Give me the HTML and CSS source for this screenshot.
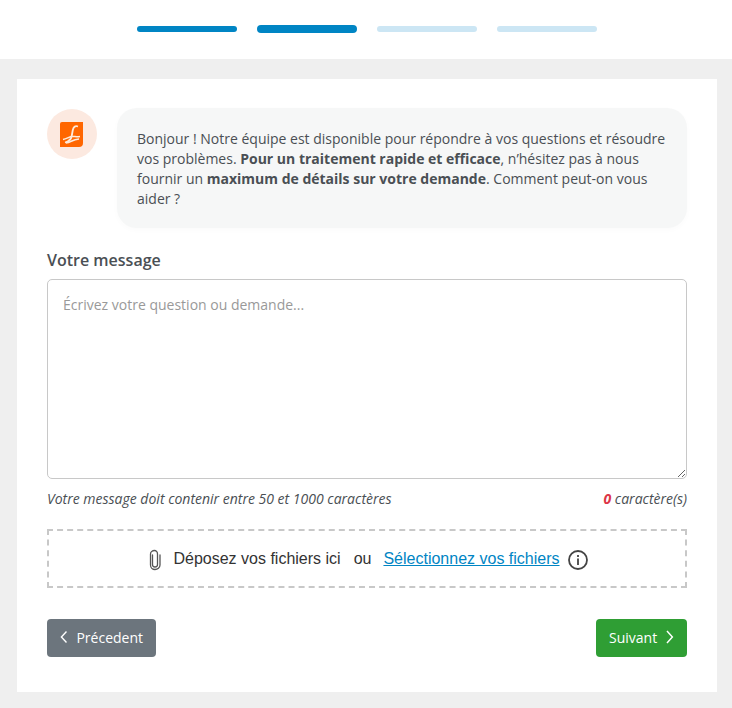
FILE: index.html
```html
<!DOCTYPE html>
<html lang="fr">
<head>
  <meta charset="UTF-8">
  <title>Votre message</title>
  <link rel="stylesheet" href="styles.css">
</head>
<body>

  <div class="steps">
    <span class="step done"></span>
    <span class="step current"></span>
    <span class="step"></span>
    <span class="step"></span>
  </div>

  <main class="card">
    <div class="intro">
      <div class="avatar">
        <svg width="23" height="25" viewBox="0 0 23 25">
          <path d="M2 0H23V21Q23 25 19 25H0V2Q0 0 2 0Z" fill="#ff6600"/>
          <path d="M18 4.500C15 3.500 13.500 5 12.800 8L11.800 13.500C11.200 17 9 19.500 5 20.500" fill="none" stroke="#fdebdc" stroke-width="1.800"/>
          <path d="M3 17.500C7 17 9 14.500 12.500 14.500C15 14.500 16 15 20 14.500" fill="none" stroke="#fdebdc" stroke-width="1.500"/>
          <path d="M6 21C11 20.500 12 17.500 19 17" fill="none" stroke="#fdebdc" stroke-width="1.500"/>
        </svg>
      </div>
      <p class="bubble">Bonjour ! Notre équipe est disponible pour répondre à vos questions et résoudre vos problèmes. <strong>Pour un traitement rapide et efficace</strong>, n’hésitez pas à nous fournir un <strong>maximum de détails sur votre demande</strong>. Comment peut-on vous aider ?</p>
    </div>

    <label class="msg-label" for="message">Votre message</label>
    <textarea class="msg-input" id="message" placeholder="Écrivez votre question ou demande..."></textarea>
    <div class="hints">
      <span>Votre message doit contenir entre 50 et 1000 caractères</span>
      <span><b class="count">0</b> caractère(s)</span>
    </div>

    <div class="dropzone">
      <svg class="clip" width="14" height="22" viewBox="0 0 14 22">
        <path d="M4.500 6V15.500C4.500 17 5.500 18 7 18C8.500 18 9.500 17 9.500 15.500V5C9.500 3 8 1.500 6.500 1.500C4.500 1.500 2.500 3 2.500 5V16C2.500 18.500 4.500 20.500 7 20.500C9.500 20.500 12 18.500 12 16V6" fill="none" stroke="#555" stroke-width="1.300" stroke-linecap="round"/>
      </svg>
      <span>Déposez vos fichiers ici</span>
      <span class="or">ou</span>
      <a class="pick" href="#">Sélectionnez vos fichiers</a>
      <svg class="info" width="20" height="20" viewBox="0 0 20 20">
        <circle cx="10" cy="10" r="9" fill="none" stroke="#444" stroke-width="1.800"/>
        <rect x="9.100" y="8.500" width="1.800" height="6.500" fill="#444"/>
        <rect x="9.100" y="5" width="1.800" height="2" fill="#444"/>
      </svg>
    </div>

    <div class="actions">
      <button class="btn btn-back" type="button">
        <svg width="8" height="14" viewBox="0 0 8 14"><path d="M7 1L1.500 7L7 13" fill="none" stroke="#fff" stroke-width="1.500"/></svg>
        Précedent
      </button>
      <button class="btn btn-next" type="button">
        Suivant
        <svg width="8" height="14" viewBox="0 0 8 14"><path d="M1 1L6.500 7L1 13" fill="none" stroke="#fff" stroke-width="1.500"/></svg>
      </button>
    </div>
  </main>

</body>
</html>
```

FILE: styles.css
```css
* {
  box-sizing: border-box;
}
body {
  margin: 0;
  background-color: #efefef;
  font-family: "Open Sans", sans-serif;
  font-size: 14px;
  line-height: 20px;
  color: #4a4f54;
}
.steps {
  height: 59px;
  background-color: #fff;
  display: flex;
  justify-content: center;
  align-items: center;
  gap: 20px;
  padding-left: 2px;
  padding-bottom: 1px;
}
.step {
  width: 100px;
  height: 6px;
  border-radius: 3px;
  background-color: #cce6f4;
}
.step.done {
  background-color: #0085c4;
}
.step.current {
  height: 8px;
  border-radius: 4px;
  background-color: #0085c4;
}
.card {
  width: 700px;
  height: 613px;
  margin: 20px 0 0 17px;
  padding: 29px 30px 0;
  background-color: #fff;
}
.intro {
  display: flex;
  gap: 20px;
  align-items: flex-start;
}
.avatar {
  width: 50px;
  height: 50px;
  margin-top: 1px;
  padding-right: 2px;
  flex-shrink: 0;
  border-radius: 50%;
  background-color: #fce9e0;
  display: flex;
  align-items: center;
  justify-content: center;
}
.bubble {
  margin: 0;
  width: 570px;
  padding: 21px 20px 19px;
  background-color: #f6f7f7;
  border-radius: 20px;
  box-shadow: 0 2px 6px rgba(0, 0, 0, 0.02);
}
.bubble strong {
  font-weight: 700;
}
.msg-label {
  display: block;
  margin-top: 21px;
  font-size: 16px;
  font-weight: 600;
  line-height: 22px;
}
.msg-input {
  display: block;
  width: 640px;
  height: 200px;
  margin-top: 8px;
  padding: 15px;
  border: 1px solid #c8c8c8;
  border-radius: 5px;
  font-family: "Open Sans", sans-serif;
  font-size: 14px;
  line-height: 20px;
  color: #4a4f54;
}
.msg-input::placeholder {
  color: #999;
}
.hints {
  display: flex;
  justify-content: space-between;
  margin-top: 10px;
  font-size: 14px;
  font-style: italic;
}
.count {
  color: #dc3545;
  font-weight: 700;
}
.dropzone {
  height: 59px;
  margin-top: 20px;
  padding-left: 2px;
  border: 2px dashed #c8c8c8;
  display: flex;
  justify-content: center;
  align-items: center;
  font-family: "Liberation Sans", Arial, sans-serif;
  font-size: 16px;
  color: #333;
}
.clip {
  margin-right: 11px;
  margin-top: 2px;
}
.or {
  margin-left: 13px;
  margin-right: 12px;
}
.pick {
  color: #0085c4;
}
.info {
  margin-left: 8px;
  margin-top: 2px;
}
.actions {
  display: flex;
  justify-content: space-between;
  margin-top: 31px;
}
.btn {
  height: 38px;
  display: flex;
  align-items: center;
  gap: 9px;
  padding: 0 13px 2px;
  border: none;
  border-radius: 4px;
  color: #fff;
  font-family: "Open Sans", sans-serif;
  font-size: 14px;
}
.btn-back {
  width: 109px;
  background-color: #6c757d;
}
.btn-next {
  width: 91px;
  background-color: #2f9e34;
}
```
